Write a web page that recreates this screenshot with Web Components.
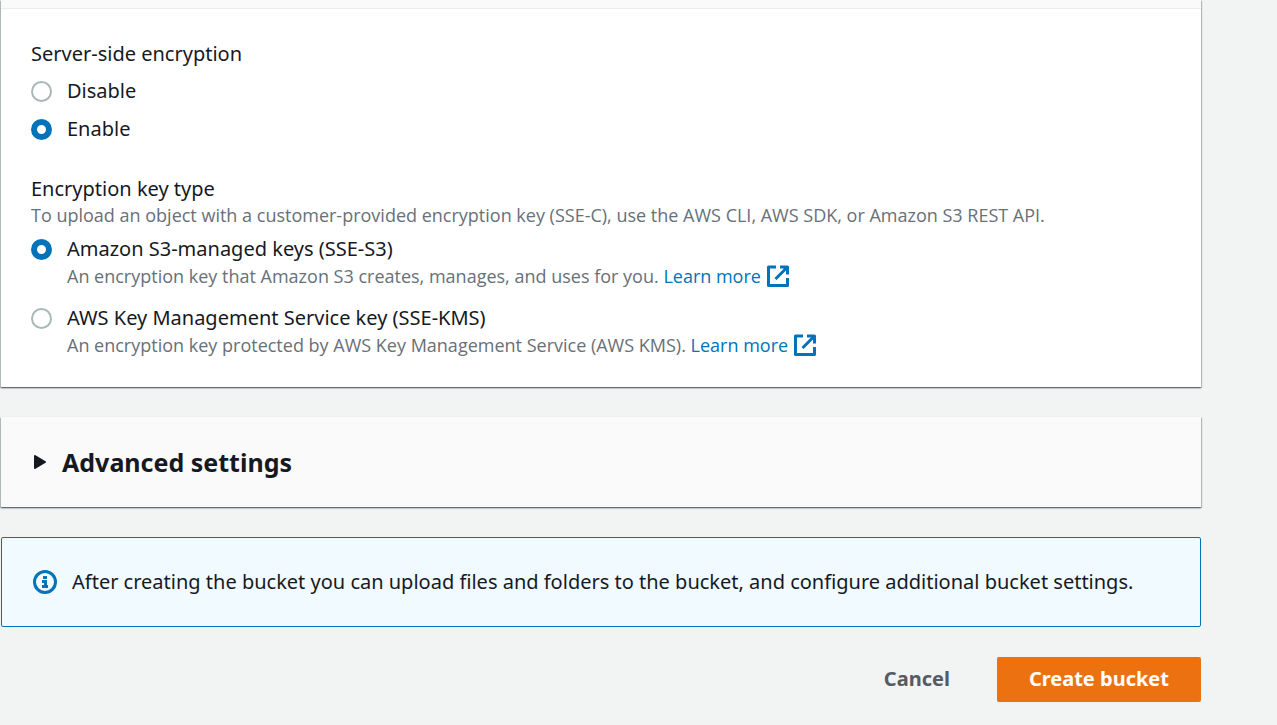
<!DOCTYPE html>
<html lang="en">
<head>
<meta charset="utf-8">
<title>Create bucket</title>
<style>
  :root {
    --text: #16191f;
    --muted: #687078;
    --link: #0073bb;
    --line: #eaeded;
  }
  body {
    margin: 0;
    background: #f2f3f3;
    color: var(--text);
    font: 20px/30px "Noto Sans", "Open Sans", sans-serif;
  }
</style>
</head>
<body>
<bucket-page></bucket-page>

<template id="bucket-page">
  <style>
    :host { display: block; padding: 0 76px 23px 1px; }
    main { display: flex; flex-direction: column; gap: 30px; }
    .options { display: flex; flex-direction: column; gap: 8px; }
    .options.tall { gap: 15px; }
    .actions { display: flex; justify-content: flex-end; gap: 15px; }
  </style>
  <main>
    <settings-card>
      <choice-group label="Server-side encryption">
        <div class="options">
          <radio-option name="encryption" label="Disable"></radio-option>
          <radio-option name="encryption" label="Enable" checked></radio-option>
        </div>
      </choice-group>
      <choice-group label="Encryption key type" hint="To upload an object with a customer-provided encryption key (SSE-C), use the AWS CLI, AWS SDK, or Amazon S3 REST API.">
        <div class="options tall">
          <radio-option name="key" label="Amazon S3-managed keys (SSE-S3)" checked>An encryption key that Amazon S3 creates, manages, and uses for you. <external-link>Learn more</external-link></radio-option>
          <radio-option name="key" label="AWS Key Management Service key (SSE-KMS)">An encryption key protected by AWS Key Management Service (AWS KMS). <external-link>Learn more</external-link></radio-option>
        </div>
      </choice-group>
    </settings-card>
    <expand-card>Advanced settings</expand-card>
    <info-alert>After creating the bucket you can upload files and folders to the bucket, and configure additional bucket settings.</info-alert>
    <div class="actions">
      <action-button>Cancel</action-button>
      <action-button primary>Create bucket</action-button>
    </div>
  </main>
</template>

<template id="settings-card">
  <style>
    :host {
      display: block; background: #fff;
      box-shadow: 0 1px 1px 0 rgba(0,28,36,.3), 1px 1px 1px 0 rgba(0,28,36,.15), -1px 1px 1px 0 rgba(0,28,36,.15), 0 1px 2px 0 rgba(0,28,36,.3);
    }
    header { height: 8px; background: #fafafa; border-bottom: 1px solid var(--line); }
    .body { display: flex; flex-direction: column; gap: 30px; padding: 30px; }
  </style>
  <header></header>
  <div class="body"><slot></slot></div>
</template>

<template id="choice-group">
  <style>
    :host { display: block; }
    fieldset { margin: 0; padding: 0; border: 0; min-width: 0; }
    legend { padding: 0; }
    p { margin: 0; color: var(--muted); font: 18px/23px "Open Sans", "Noto Sans", sans-serif; }
    p:empty { display: none; }
    .choices { padding-top: 7px; }
  </style>
  <fieldset>
    <legend></legend>
    <p></p>
    <div class="choices"><slot></slot></div>
  </fieldset>
</template>

<template id="radio-option">
  <style>
    :host { display: grid; grid-template-columns: 21px 1fr; column-gap: 15px; align-items: center; }
    input {
      appearance: none; box-sizing: border-box; width: 21px; height: 21px; margin: 0;
      border: 2px solid #aab7b8; border-radius: 50%; background: #fff;
    }
    input:checked { border: 6px solid var(--link); }
    .hint { grid-column: 2; color: var(--muted); font: 18px/24px "Open Sans", "Noto Sans", sans-serif; }
    .hint[hidden] { display: none; }
  </style>
  <input type="radio" id="choice">
  <label for="choice"></label>
  <div class="hint"><slot></slot></div>
</template>

<template id="external-link">
  <style>
    :host { display: inline; }
    a { color: var(--link); text-decoration: none; }
    svg { width: 22px; height: 22px; margin: -2px 0 -2px 6px; vertical-align: -2px; }
  </style>
  <a href="#"><slot></slot><svg viewBox="0 0 22 22" fill="none" stroke="currentColor" stroke-width="3" aria-hidden="true"><path d="M9 2H1.500V20.500H20.500V13M13 2H20.500V9.500M20 2.500L8.500 14" stroke-linejoin="round"/></svg></a>
</template>

<template id="expand-card">
  <style>
    :host {
      display: block; background: #fafafa;
      box-shadow: 0 1px 1px 0 rgba(0,28,36,.3), 1px 1px 1px 0 rgba(0,28,36,.15), -1px 1px 1px 0 rgba(0,28,36,.15), 0 1px 2px 0 rgba(0,28,36,.3);
    }
    h2 { margin: 0; font: inherit; }
    button {
      display: flex; align-items: center; gap: 15px; width: 100%; padding: 27px 32px;
      border: 0; background: none; color: inherit; text-align: left;
      font: bold 25px/36px "Noto Sans", "Open Sans", sans-serif;
    }
    svg { width: 14px; height: 16px; }
  </style>
  <h2><button type="button" aria-expanded="false">
    <svg viewBox="0 0 14 16" fill="currentColor" stroke="currentColor" stroke-width="2" stroke-linejoin="round" aria-hidden="true"><path d="M2 2L12 8L2 14Z"/></svg>
    <span><slot></slot></span>
  </button></h2>
</template>

<template id="info-alert">
  <style>
    :host {
      display: flex; align-items: center; gap: 15px; padding: 29px 31px;
      border: 1px solid var(--link); border-radius: 2px; background: #f1faff;
    }
    svg { flex: none; width: 24px; height: 24px; color: var(--link); }
  </style>
  <svg viewBox="0 0 24 24" aria-hidden="true"><circle cx="12" cy="12" r="10.500" fill="none" stroke="currentColor" stroke-width="3"/><path fill="currentColor" d="M10 6h4v3h-4zM9 10h5v5h1v3H9v-3h2v-2H9z"/></svg>
  <div role="status"><slot></slot></div>
</template>

<template id="action-button">
  <style>
    :host { display: block; }
    button {
      padding: 7px 32px 8px; border: 0; border-radius: 2px; background: none; color: #545b64;
      font: bold 20px/30px "Noto Sans", "Open Sans", sans-serif;
    }
    :host([primary]) button { background: #ec7211; color: #fff; }
  </style>
  <button type="button"><slot></slot></button>
</template>

<script>
  class TemplateElement extends HTMLElement {
    constructor() {
      super();
      const template = document.getElementById(this.constructor.tag);
      this.attachShadow({ mode: "open" }).append(template.content.cloneNode(true));
    }
  }

  class SettingsCard extends TemplateElement { static tag = "settings-card"; }
  class ExternalLink extends TemplateElement { static tag = "external-link"; }
  class ExpandCard extends TemplateElement { static tag = "expand-card"; }
  class InfoAlert extends TemplateElement { static tag = "info-alert"; }
  class ActionButton extends TemplateElement { static tag = "action-button"; }
  class BucketPage extends TemplateElement { static tag = "bucket-page"; }

  class ChoiceGroup extends TemplateElement {
    static tag = "choice-group";
    connectedCallback() {
      this.shadowRoot.querySelector("legend").textContent = this.getAttribute("label");
      this.shadowRoot.querySelector("p").textContent = this.getAttribute("hint") || "";
    }
  }

  class RadioOption extends TemplateElement {
    static tag = "radio-option";
    connectedCallback() {
      const input = this.shadowRoot.querySelector("input");
      input.name = this.getAttribute("name");
      input.checked = this.hasAttribute("checked");
      this.shadowRoot.querySelector("label").textContent = this.getAttribute("label");
      this.shadowRoot.querySelector(".hint").hidden = !this.textContent.trim();
      // Each radio sits in its own shadow tree, so siblings are cleared by hand.
      input.addEventListener("change", () => {
        for (const other of this.parentElement.querySelectorAll("radio-option")) {
          if (other !== this) other.shadowRoot.querySelector("input").checked = false;
        }
      });
    }
  }

  for (const type of [SettingsCard, ChoiceGroup, RadioOption, ExternalLink, ExpandCard, InfoAlert, ActionButton, BucketPage]) {
    customElements.define(type.tag, type);
  }
</script>
</body>
</html>
